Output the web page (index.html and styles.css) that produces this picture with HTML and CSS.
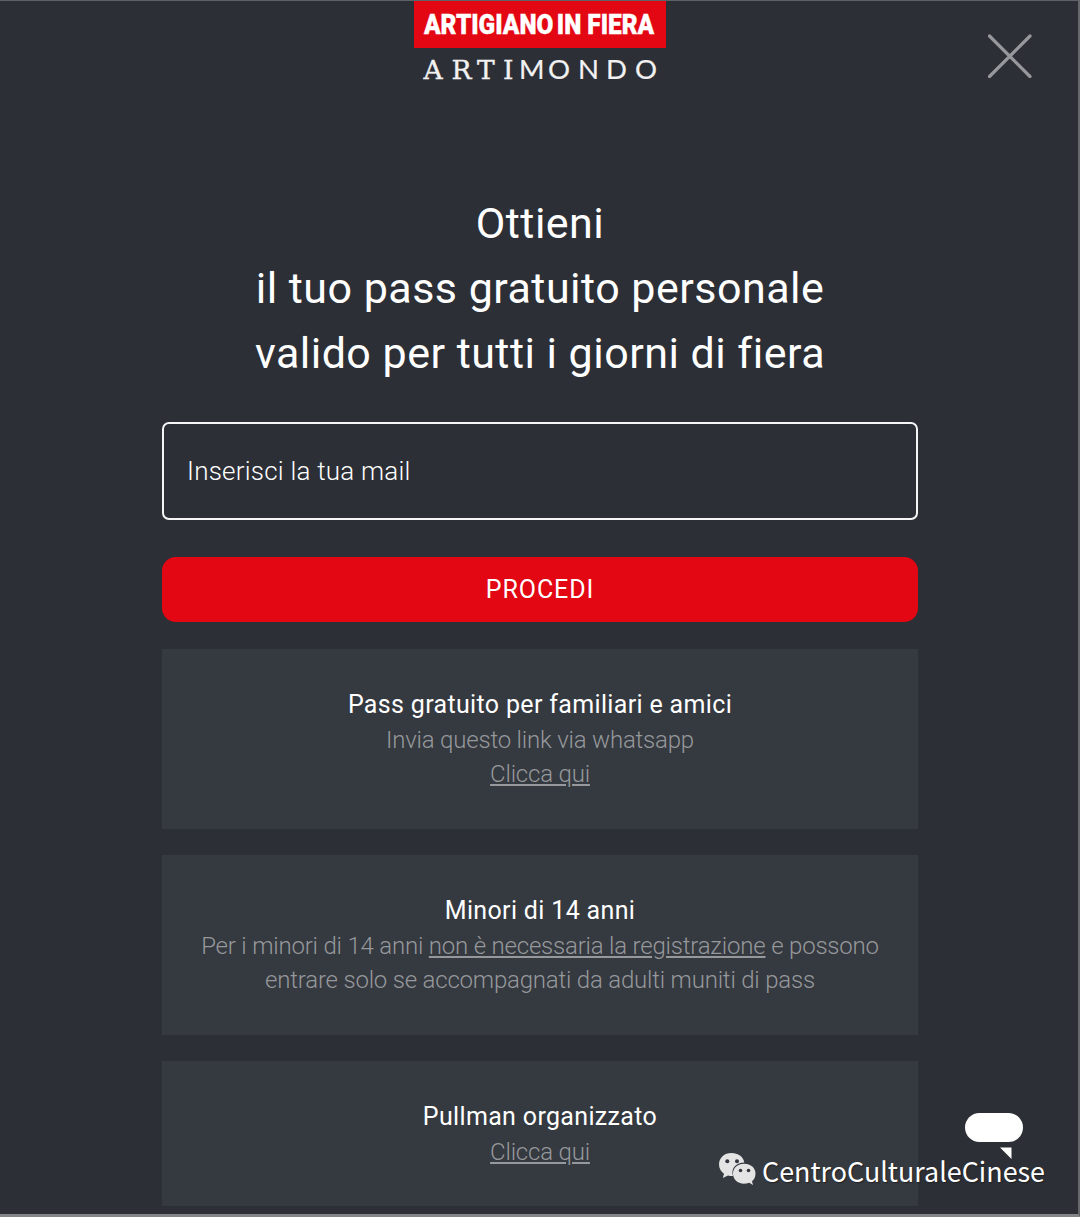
FILE: index.html
```html
<!DOCTYPE html>
<html lang="it">
<head>
    <meta charset="UTF-8">
    <meta name="viewport" content="width=device-width, initial-scale=1.0">
    <title>Artigiano in Fiera - Pass gratuito</title>
    <link rel="stylesheet" href="styles.css">
</head>
<body>

    <div class="page">
        <!-- Logo -->
        <header class="header">
            <div class="logo">
                <div class="logo-fiera">
                    <div class="logo-words"><span>ARTIGIANO</span><span>IN</span><span class="logo-last">FIERA</span></div>
                </div>
                <svg width="252" height="37" viewBox="0 0 252 37">
                    <text class="logo-slab" y="31" x="9.5 37.5 63 89">ARTI</text>
                    <text class="logo-sans" y="31" x="105 134 164 192 221">MONDO</text>
                </svg>
            </div>
            <button class="close-btn" aria-label="Chiudi">
                <svg width="44" height="44" viewBox="0 0 44 44">
                    <path d="M1.5 2 L42 42.5 M42 2 L1.5 42.5" stroke="#96989b" stroke-width="3.2" stroke-linecap="round"/>
                </svg>
            </button>
        </header>

        <main class="container">
            <h1>Ottieni<br>il tuo pass gratuito personale<br>valido per tutti i giorni di fiera</h1>

            <form class="form-pass">
                <input type="email" id="email" placeholder="Inserisci la tua mail">
                <button type="button" class="submit-btn">PROCEDI</button>
            </form>

            <section class="card">
                <h2>Pass gratuito per familiari e amici</h2>
                <p>Invia questo link via whatsapp</p>
                <p><a href="#">Clicca qui</a></p>
            </section>

            <section class="card">
                <h2>Minori di 14 anni</h2>
                <p>Per i minori di 14 anni <u>non è necessaria la registrazione</u> e possono<br>entrare solo se accompagnati da adulti muniti di pass</p>
            </section>

            <section class="card card-short">
                <h2>Pullman organizzato</h2>
                <p><a href="#">Clicca qui</a></p>
            </section>
        </main>
    </div>

    <!-- Chat -->
    <div class="chat">
        <svg width="58" height="47" viewBox="0 0 58 47">
            <rect width="58" height="29" rx="14.5" fill="#fff"/>
            <path d="M35 34.5 H46.5 V46 Z" fill="#fff"/>
        </svg>
    </div>

    <!-- Account WeChat -->
    <div class="wechat">
        <svg width="38" height="34" viewBox="0 0 38 34">
            <path fill="#e4e4e4" d="M13.5 1 C6.3 1 1 5.8 1 12.5 C1 16.5 3 19.5 6 21.7 L4.8 26 L10 23.5 C12 24 14 24.2 15 24 C12.5 16 18.5 10.5 26.3 10.5 C25.3 4.5 20 1 13.5 1 Z"/>
            <path fill="#e4e4e4" d="M26 11.7 C19.5 11.7 15 16 15 21.6 C15 27.4 19.5 31.7 26 31.7 C28.2 31.7 29.8 31.3 31.2 30.8 L35 33 L34 29.3 C36.3 27.4 37.5 25 37.5 21.6 C37.5 16 33 11.7 26 11.7 Z"/>
            <g fill="#33363d">
                <circle cx="9.3" cy="9.3" r="2"/>
                <circle cx="19" cy="9.3" r="2"/>
                <circle cx="22.5" cy="18.5" r="1.8"/>
                <circle cx="30.5" cy="18.5" r="1.8"/>
            </g>
        </svg>
        <span>CentroCulturaleCinese</span>
    </div>

</body>
</html>
```
FILE: styles.css
```css
* {
    box-sizing: border-box;
}
body {
    margin: 0;
    font-family: Roboto, Arial, sans-serif;
    background: #2c2f36;
    color: white;
    text-align: center;
}
.page {
    height: 1217px;
    overflow: hidden;
    border-top: 1px solid #5f6369;
    border-right: 2px solid #66686b;
    border-bottom: 3px solid #848588;
}

/* Logo e chiusura */
.header {
    position: relative;
    height: 190px;
    padding-left: 2px;
}
.logo {
    width: 252px;
    margin: 0 auto;
}
.logo svg {
    display: block;
}
.logo-fiera {
    height: 47px;
    padding-left: 9.5px;
    background: #e30613;
}
.logo-words {
    display: flex;
    gap: 4px;
    width: 266px;
    font-size: 28px;
    font-weight: 900;
    line-height: 48px;
    transform: scaleX(0.87);
    transform-origin: left;
    -webkit-text-stroke: 0.4px white;
}
.logo-last {
    margin-left: 3px;
}
.logo-slab {
    font-family: "DejaVu Serif", serif;
    font-size: 26.5px;
    fill: #f2f2f2;
    stroke: #f2f2f2;
    stroke-width: 0.4px;
}
.logo-sans {
    font-family: Lato, sans-serif;
    font-size: 27.5px;
    fill: #f2f2f2;
    stroke: #f2f2f2;
    stroke-width: 0.2px;
}
.close-btn {
    position: absolute;
    top: 33px;
    right: 46px;
    width: 44px;
    height: 44px;
    padding: 0;
    border: none;
    background: none;
}

.container {
    width: 756px;
    margin-left: 162px;
}
h1 {
    margin: 0 0 36px;
    font-size: 43px;
    font-weight: 400;
    line-height: 65px;
    letter-spacing: 0.48px;
}

/* Form */
input {
    display: block;
    width: 100%;
    height: 98px;
    padding: 0 23px;
    border: 2px solid #f5f5f5;
    border-radius: 7px;
    background: transparent;
    font-family: inherit;
    font-size: 26px;
    font-weight: 300;
    letter-spacing: 0.22px;
}
input::placeholder {
    color: white;
    opacity: 1;
}
.submit-btn {
    display: block;
    width: 100%;
    height: 65px;
    margin: 37px 0 27px;
    padding: 0;
    border: none;
    border-radius: 14px;
    background-color: #e30613;
    color: white;
    font-family: inherit;
    font-size: 25px;
    letter-spacing: 0.9px;
}

/* Riquadri */
.card {
    height: 180px;
    margin-bottom: 26px;
    padding-top: 38px;
    background: #353940;
}
.card-short {
    height: 145px;
    margin-bottom: 0;
}
h2 {
    margin: 0;
    font-size: 25px;
    font-weight: 400;
    line-height: 36px;
    letter-spacing: 0.34px;
}
p {
    margin: 0;
    color: #96989b;
    font-size: 24px;
    font-weight: 300;
    line-height: 34px;
    letter-spacing: -0.2px;
}
a {
    color: inherit;
}

/* Elementi sopra la pagina */
.chat {
    position: absolute;
    top: 1113px;
    left: 965px;
    line-height: 0;
}
.wechat {
    position: absolute;
    top: 1152px;
    left: 718px;
    display: flex;
    gap: 6px;
    font-family: "Noto Sans CJK SC", sans-serif;
    font-size: 26.9px;
    line-height: 38px;
    text-shadow: 1px 1px 1px #222;
}
```
